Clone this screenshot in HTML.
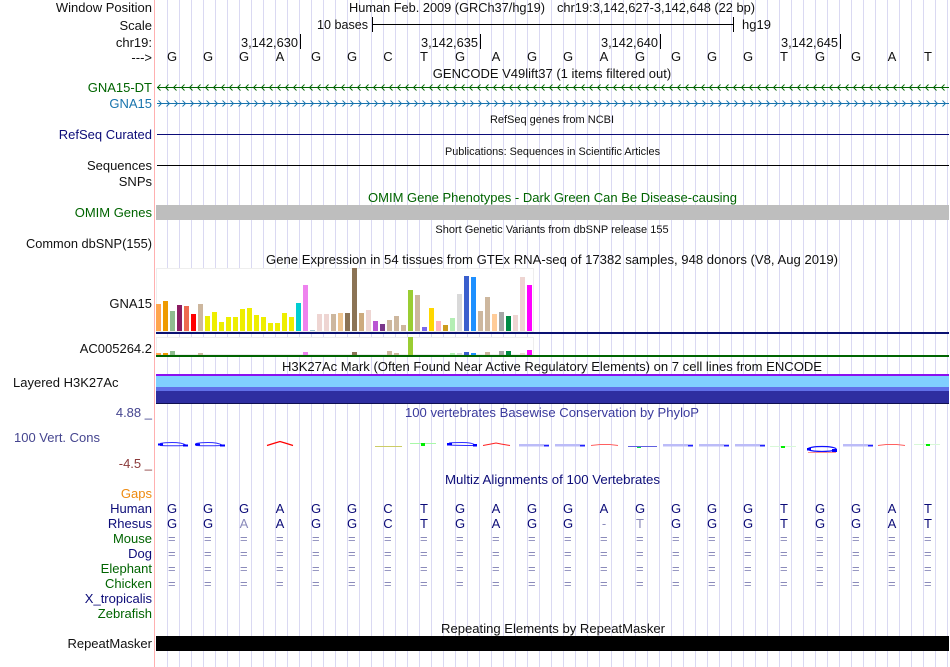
<!DOCTYPE html>
<html>
<head>
<meta charset="utf-8">
<style>
html,body{margin:0;padding:0;background:#fff;width:950px;height:667px;overflow:hidden}
#g{position:absolute;left:0;top:0;width:950px;height:667px;background:repeating-linear-gradient(to right,#dad9f2 0,#dad9f2 1px,transparent 1px,transparent 12px) 167px 0/783px 667px no-repeat}
#p{position:absolute;left:154px;top:0;width:1px;height:667px;background:#ffb0b0}
svg{position:absolute;left:0;top:0}
text{font-family:"Liberation Sans",sans-serif;font-size:13px;fill:#111}
.e{text-anchor:end}
.c{text-anchor:middle}
.s{font-size:11px}
.n{fill:#0c0c78}
.d{fill:#006400}
.q{fill:#8a8aba}
.f{fill:#8a8aba}
</style>
</head>
<body>
<div id="g"></div>
<div id="p"></div>
<svg width="950" height="667" viewBox="0 0 950 667" xmlns="http://www.w3.org/2000/svg">
<defs>
<pattern id="cl" x="157" y="84" width="8" height="7" patternUnits="userSpaceOnUse"><path d="M3.500 .5L.5 3.500L3.500 6.500" fill="none" stroke="#006400" stroke-width=".9"/></pattern>
<pattern id="cr" x="157" y="100" width="8" height="7" patternUnits="userSpaceOnUse"><path d="M1.500 .5L4.500 3.500L1.500 6.500" fill="none" stroke="#1874ad" stroke-width=".9"/></pattern>
</defs>

<!-- left labels -->
<text class="e" x="152" y="12">Window Position</text>
<text class="e" x="152" y="30">Scale</text>
<text class="e" x="152" y="47">chr19:</text>
<text class="e" x="152" y="62">---&gt;</text>
<text class="e d" x="152" y="92">GNA15-DT</text>
<text class="e" x="152" y="108" style="fill:#1874ad">GNA15</text>
<text class="e n" x="152" y="139">RefSeq Curated</text>
<text class="e" x="152" y="170">Sequences</text>
<text class="e" x="152" y="186">SNPs</text>
<text class="e d" x="152" y="217">OMIM Genes</text>
<text x="26" y="248" textLength="126" lengthAdjust="spacingAndGlyphs">Common dbSNP(155)</text>
<text class="e" x="152" y="308">GNA15</text>
<text class="e" x="152" y="353">AC005264.2</text>
<text x="13" y="387">Layered H3K27Ac</text>
<text class="e" x="152" y="417" style="fill:#45458f">4.88 _</text>
<text x="14" y="442" style="fill:#45458f">100 Vert. Cons</text>
<text class="e" x="152" y="468" style="fill:#8b3a3a">-4.5 _</text>
<text class="e" x="152" y="498" style="fill:#ee8a10">Gaps</text>
<text class="e n" x="152" y="513">Human</text>
<text class="e n" x="152" y="528">Rhesus</text>
<text class="e d" x="152" y="543">Mouse</text>
<text class="e n" x="152" y="558">Dog</text>
<text class="e d" x="152" y="573">Elephant</text>
<text class="e d" x="152" y="588">Chicken</text>
<text class="e n" x="152" y="603">X_tropicalis</text>
<text class="e d" x="152" y="618">Zebrafish</text>
<text class="e" x="152" y="648">RepeatMasker</text>

<!-- header -->
<text x="349" y="12" textLength="196" lengthAdjust="spacingAndGlyphs">Human Feb. 2009 (GRCh37/hg19)</text>
<text x="557" y="12" textLength="198" lengthAdjust="spacingAndGlyphs">chr19:3,142,627-3,142,648 (22 bp)</text>
<text x="317" y="29" textLength="51" lengthAdjust="spacingAndGlyphs">10 bases</text>
<path d="M372.500 17V32M373 24.500H733M733.500 17V32" stroke="#000" stroke-width="1" fill="none"/>
<text x="742" y="29">hg19</text>
<text x="241" y="47" textLength="57" lengthAdjust="spacingAndGlyphs">3,142,630</text>
<text x="421" y="47" textLength="57" lengthAdjust="spacingAndGlyphs">3,142,635</text>
<text x="601" y="47" textLength="57" lengthAdjust="spacingAndGlyphs">3,142,640</text>
<text x="781" y="47" textLength="57" lengthAdjust="spacingAndGlyphs">3,142,645</text>
<path d="M300.500 34V49M480.500 34V49M660.500 34V49M840.500 34V49" stroke="#000" fill="none"/>
<g>
<text class="c" x="172" y="61">G</text><text class="c" x="208" y="61">G</text><text class="c" x="244" y="61">G</text><text class="c" x="280" y="61">A</text><text class="c" x="316" y="61">G</text><text class="c" x="352" y="61">G</text><text class="c" x="388" y="61">C</text><text class="c" x="424" y="61">T</text><text class="c" x="460" y="61">G</text><text class="c" x="496" y="61">A</text><text class="c" x="532" y="61">G</text><text class="c" x="568" y="61">G</text><text class="c" x="604" y="61">A</text><text class="c" x="640" y="61">G</text><text class="c" x="676" y="61">G</text><text class="c" x="712" y="61">G</text><text class="c" x="748" y="61">G</text><text class="c" x="784" y="61">T</text><text class="c" x="820" y="61">G</text><text class="c" x="856" y="61">G</text><text class="c" x="892" y="61">A</text><text class="c" x="928" y="61">T</text>
</g>

<!-- GENCODE -->
<text class="c" x="552" y="78">GENCODE V49lift37 (1 items filtered out)</text>
<rect x="157" y="87" width="792" height="1" fill="#006400"/>
<rect x="157" y="84" width="792" height="7" fill="url(#cl)"/>
<rect x="157" y="103" width="792" height="1" fill="#1874ad"/>
<rect x="157" y="100" width="792" height="7" fill="url(#cr)"/>

<text class="c s" x="552" y="123">RefSeq genes from NCBI</text>
<rect x="157" y="134" width="792" height="1" fill="#0c0c78"/>
<text x="445" y="155" class="s" textLength="215" lengthAdjust="spacingAndGlyphs">Publications: Sequences in Scientific Articles</text>
<rect x="157" y="165" width="792" height="1" fill="#000"/>

<text x="368" y="202" class="d" textLength="369" lengthAdjust="spacingAndGlyphs">OMIM Gene Phenotypes - Dark Green Can Be Disease-causing</text>
<rect x="156" y="205" width="793" height="15" fill="#bebebe"/>
<text class="c s" x="552" y="233">Short Genetic Variants from dbSNP release 155</text>
<text x="266" y="264" textLength="572" lengthAdjust="spacingAndGlyphs">Gene Expression in 54 tissues from GTEx RNA-seq of 17382 samples, 948 donors (V8, Aug 2019)</text>

<!-- GTEx top -->
<path d="M156.500 268.500H533.500V331.500H156.500Z" fill="#fff" stroke="#eeeeee"/>
<g>
<rect x="156" y="304" width="5" height="27" fill="#ffa54f"/>
<rect x="163" y="301" width="5" height="30" fill="#ee9a00"/>
<rect x="170" y="311" width="5" height="20" fill="#8fbc8f"/>
<rect x="177" y="305" width="5" height="26" fill="#8b1c62"/>
<rect x="184" y="306" width="5" height="25" fill="#ee6a50"/>
<rect x="191" y="314" width="5" height="17" fill="#ff0000"/>
<rect x="198" y="304" width="5" height="27" fill="#cdb79e"/>
<rect x="205" y="316" width="5" height="15" fill="#eeee00"/>
<rect x="212" y="312" width="5" height="19" fill="#eeee00"/>
<rect x="219" y="322" width="5" height="9" fill="#eeee00"/>
<rect x="226" y="317" width="5" height="14" fill="#eeee00"/>
<rect x="233" y="317" width="5" height="14" fill="#eeee00"/>
<rect x="240" y="309" width="5" height="22" fill="#eeee00"/>
<rect x="247" y="308" width="5" height="23" fill="#eeee00"/>
<rect x="254" y="315" width="5" height="16" fill="#eeee00"/>
<rect x="261" y="317" width="5" height="14" fill="#eeee00"/>
<rect x="268" y="323" width="5" height="8" fill="#eeee00"/>
<rect x="275" y="323" width="5" height="8" fill="#eeee00"/>
<rect x="282" y="313" width="5" height="18" fill="#eeee00"/>
<rect x="289" y="317" width="5" height="14" fill="#eeee00"/>
<rect x="296" y="303" width="5" height="28" fill="#00ced1"/>
<rect x="303" y="285" width="5" height="46" fill="#ee82ee"/>
<rect x="310" y="330" width="5" height="1" fill="#9ac0cd"/>
<rect x="317" y="314" width="5" height="17" fill="#eed5d2"/>
<rect x="324" y="314" width="5" height="17" fill="#eed5d2"/>
<rect x="331" y="314" width="5" height="17" fill="#cdb79e"/>
<rect x="338" y="313" width="5" height="18" fill="#eec591"/>
<rect x="345" y="313" width="5" height="18" fill="#8b7355"/>
<rect x="352" y="268" width="5" height="63" fill="#8b7355"/>
<rect x="359" y="313" width="5" height="18" fill="#cdaa7d"/>
<rect x="366" y="310" width="5" height="21" fill="#eed5d2"/>
<rect x="373" y="321" width="5" height="10" fill="#ba55d3"/>
<rect x="380" y="324" width="5" height="7" fill="#7a378b"/>
<rect x="387" y="320" width="5" height="11" fill="#cdb79e"/>
<rect x="394" y="316" width="5" height="15" fill="#cdb79e"/>
<rect x="401" y="325" width="5" height="6" fill="#cdb79e"/>
<rect x="408" y="290" width="5" height="41" fill="#9acd32"/>
<rect x="415" y="295" width="5" height="36" fill="#cdb79e"/>
<rect x="422" y="327" width="5" height="4" fill="#7b68ee"/>
<rect x="429" y="308" width="5" height="23" fill="#ffd700"/>
<rect x="436" y="321" width="5" height="10" fill="#ffb6c1"/>
<rect x="443" y="325" width="5" height="6" fill="#cd9b1d"/>
<rect x="450" y="318" width="5" height="13" fill="#b4eeb4"/>
<rect x="457" y="294" width="5" height="37" fill="#d9d9d9"/>
<rect x="464" y="276" width="5" height="55" fill="#3a5fcd"/>
<rect x="471" y="277" width="5" height="54" fill="#1e90ff"/>
<rect x="478" y="311" width="5" height="20" fill="#cdb79e"/>
<rect x="485" y="297" width="5" height="34" fill="#cdb79e"/>
<rect x="492" y="314" width="5" height="17" fill="#ffcc99"/>
<rect x="499" y="312" width="5" height="19" fill="#a6a6a6"/>
<rect x="506" y="316" width="5" height="15" fill="#008b45"/>
<rect x="513" y="315" width="5" height="16" fill="#eed5d2"/>
<rect x="520" y="277" width="5" height="54" fill="#eed5d2"/>
<rect x="527" y="285" width="5" height="46" fill="#ff00ff"/>
</g>
<rect x="156" y="332" width="793" height="2" fill="#0a1172"/>

<!-- GTEx bottom -->
<path d="M156.500 337.500H533.500V354.500H156.500Z" fill="#fff" stroke="#eeeeee"/>
<g>
<rect x="156" y="353" width="5" height="2" fill="#ffa54f"/>
<rect x="163" y="353" width="5" height="2" fill="#ee9a00"/>
<rect x="170" y="351" width="5" height="4" fill="#8fbc8f"/>
<rect x="198" y="353" width="5" height="2" fill="#cdb79e"/>
<rect x="303" y="352" width="5" height="3" fill="#ee82ee"/>
<rect x="352" y="352" width="5" height="3" fill="#8b7355"/>
<rect x="387" y="351" width="5" height="4" fill="#cdb79e"/>
<rect x="394" y="353" width="5" height="2" fill="#cdb79e"/>
<rect x="408" y="337" width="5" height="18" fill="#9acd32"/>
<rect x="450" y="353" width="5" height="2" fill="#b4eeb4"/>
<rect x="457" y="353" width="5" height="2" fill="#d9d9d9"/>
<rect x="464" y="352" width="5" height="3" fill="#3a5fcd"/>
<rect x="471" y="353" width="5" height="2" fill="#1e90ff"/>
<rect x="485" y="352" width="5" height="3" fill="#cdb79e"/>
<rect x="499" y="351" width="5" height="4" fill="#a6a6a6"/>
<rect x="506" y="351" width="5" height="4" fill="#008b45"/>
<rect x="520" y="353" width="5" height="2" fill="#eed5d2"/>
<rect x="527" y="350" width="5" height="5" fill="#ff00ff"/>
</g>
<rect x="156" y="355" width="793" height="2" fill="#006400"/>

<!-- H3K27Ac -->
<text x="282" y="371" textLength="540" lengthAdjust="spacingAndGlyphs">H3K27Ac Mark (Often Found Near Active Regulatory Elements) on 7 cell lines from ENCODE</text>
<rect x="156" y="374" width="793" height="2" fill="#8a10f0"/>
<rect x="156" y="376" width="793" height="11" fill="#80d0ff"/>
<rect x="156" y="387" width="793" height="4" fill="#6070e8"/>
<rect x="156" y="391" width="793" height="12" fill="#2e2ea0"/>
<rect x="156" y="403" width="793" height="1" fill="#101050"/>

<!-- Conservation -->
<text x="405" y="417" textLength="294" lengthAdjust="spacingAndGlyphs" style="fill:#3a3a9c">100 vertebrates Basewise Conservation by PhyloP</text>
<g fill="none">
<path d="M160 443.500Q164 442.500 172 442.500Q182 442.500 186 445M160 445.500Q170 446 186 445.500" stroke="#3030ff" stroke-width="1"/>
<rect x="158" y="443.500" width="5" height="2" fill="#0000ff"/><rect x="183" y="444.500" width="5" height="2" fill="#0000ff"/>
<path d="M196 443.500Q200 442.500 208 442.500Q218 442.500 222 445M196 445.500Q206 446 222 445.500" stroke="#3030ff" stroke-width="1"/>
<rect x="195" y="443.500" width="5" height="2" fill="#0000ff"/><rect x="220" y="444.500" width="5" height="2" fill="#0000ff"/>
<path d="M267 445.500L275 443L280 441.500L285 443L293 445.500" stroke="#ff0000" stroke-width="1.200"/>
<path d="M375 446.500H402" stroke="#cccc66"/>
<path d="M410 443.500H436" stroke="#a8f8a8"/>
<rect x="421" y="443" width="4" height="3" fill="#00ee00"/>
<path d="M449 443Q453 442.500 462 442.500Q472 442.500 475 445M449 445Q456 445.500 476 445.500" stroke="#3030ff" stroke-width="1"/>
<rect x="447" y="443" width="5" height="2.500" fill="#0000ff"/><rect x="473" y="444" width="4" height="2.500" fill="#0000ff"/>
<path d="M483 445.500L491 444L496 443L501 444L510 445.500" stroke="#ff2020" stroke-width="1"/>
<rect x="519" y="444" width="30" height="2.500" fill="#bcbcf8"/><rect x="544" y="445" width="5" height="1.500" fill="#2020ff"/>
<rect x="555" y="444" width="30" height="2.500" fill="#bcbcf8"/><rect x="580" y="445" width="5" height="1.500" fill="#2020ff"/>
<path d="M591 445.500L600 444.500H610L618 445.500" stroke="#ff6060" stroke-width="1"/>
<path d="M628 446.500H657" stroke="#6060e0"/>
<rect x="637" y="447" width="4" height="1" fill="#00dd44"/>
<rect x="663" y="444" width="30" height="2.500" fill="#bcbcf8"/><rect x="688" y="445" width="5" height="1.500" fill="#2020ff"/>
<rect x="699" y="444" width="30" height="2.500" fill="#bcbcf8"/><rect x="724" y="445" width="5" height="1.500" fill="#2020ff"/>
<rect x="735" y="444" width="30" height="2.500" fill="#bcbcf8"/><rect x="760" y="445" width="5" height="1.500" fill="#2020ff"/>
<path d="M770 446.500H796" stroke="#d8f8d8"/>
<rect x="781" y="446" width="4" height="2" fill="#00ee00"/>
<ellipse cx="822" cy="449" rx="14" ry="2.500" stroke="#1010ff" stroke-width="1.300"/>
<rect x="807" y="448" width="4" height="2.500" fill="#0000ff"/><rect x="832" y="449" width="5" height="3" fill="#0000ff"/>
<path d="M808 452.500H836" stroke="#ff9090"/>
<rect x="843" y="444" width="30" height="2.500" fill="#bcbcf8"/><rect x="868" y="445" width="5" height="1.500" fill="#2020ff"/>
<path d="M878 445.500L886 444.500H897L905 445.500" stroke="#ff6060" stroke-width="1"/>
<path d="M914 444.500H940" stroke="#d8f8d8"/>
<rect x="926" y="444" width="4" height="2" fill="#00ee00"/>
</g>

<!-- Multiz -->
<text x="445" y="484" class="n" textLength="215" lengthAdjust="spacingAndGlyphs">Multiz Alignments of 100 Vertebrates</text>
<g>
<text class="c n" x="172" y="513">G</text><text class="c n" x="208" y="513">G</text><text class="c n" x="244" y="513">G</text><text class="c n" x="280" y="513">A</text><text class="c n" x="316" y="513">G</text><text class="c n" x="352" y="513">G</text><text class="c n" x="388" y="513">C</text><text class="c n" x="424" y="513">T</text><text class="c n" x="460" y="513">G</text><text class="c n" x="496" y="513">A</text><text class="c n" x="532" y="513">G</text><text class="c n" x="568" y="513">G</text><text class="c n" x="604" y="513">A</text><text class="c n" x="640" y="513">G</text><text class="c n" x="676" y="513">G</text><text class="c n" x="712" y="513">G</text><text class="c n" x="748" y="513">G</text><text class="c n" x="784" y="513">T</text><text class="c n" x="820" y="513">G</text><text class="c n" x="856" y="513">G</text><text class="c n" x="892" y="513">A</text><text class="c n" x="928" y="513">T</text>
<text class="c n" x="172" y="528">G</text><text class="c n" x="208" y="528">G</text><text class="c f" x="244" y="528">A</text><text class="c n" x="280" y="528">A</text><text class="c n" x="316" y="528">G</text><text class="c n" x="352" y="528">G</text><text class="c n" x="388" y="528">C</text><text class="c n" x="424" y="528">T</text><text class="c n" x="460" y="528">G</text><text class="c n" x="496" y="528">A</text><text class="c n" x="532" y="528">G</text><text class="c n" x="568" y="528">G</text><text class="c f" x="604" y="528">-</text><text class="c f" x="640" y="528">T</text><text class="c n" x="676" y="528">G</text><text class="c n" x="712" y="528">G</text><text class="c n" x="748" y="528">G</text><text class="c n" x="784" y="528">T</text><text class="c n" x="820" y="528">G</text><text class="c n" x="856" y="528">G</text><text class="c n" x="892" y="528">A</text><text class="c n" x="928" y="528">T</text>
</g>
<text class="q" y="543" x="168 204 240 276 312 348 384 420 456 492 528 564 600 636 672 708 744 780 816 852 888 924">======================</text>
<text class="q" y="558" x="168 204 240 276 312 348 384 420 456 492 528 564 600 636 672 708 744 780 816 852 888 924">======================</text>
<text class="q" y="573" x="168 204 240 276 312 348 384 420 456 492 528 564 600 636 672 708 744 780 816 852 888 924">======================</text>
<text class="q" y="588" x="168 204 240 276 312 348 384 420 456 492 528 564 600 636 672 708 744 780 816 852 888 924">======================</text>

<!-- RepeatMasker -->
<text x="441" y="633" textLength="224" lengthAdjust="spacingAndGlyphs">Repeating Elements by RepeatMasker</text>
<rect x="156" y="636" width="793" height="15" fill="#000"/>
</svg>
</body>
</html>
